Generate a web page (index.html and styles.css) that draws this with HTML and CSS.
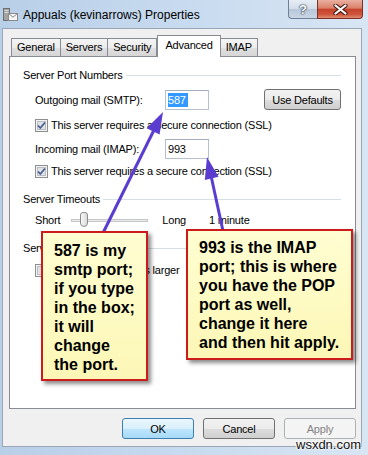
FILE: index.html
```html
<!DOCTYPE html>
<html>
<head>
<meta charset="utf-8">
<title>Appuals (kevinarrows) Properties</title>
<link rel="stylesheet" href="styles.css">
</head>
<body>
<div class="window">
  <div class="titlebar">
    <svg class="app-icon" width="15" height="14" viewBox="0 0 15 14">
      <rect x="0.5" y="0.5" width="6" height="12" fill="#a3a3a3" stroke="#6f6f6f"/>
      <rect x="1.5" y="2" width="4" height="1" fill="#d8d8d8"/>
      <rect x="1.5" y="4" width="4" height="1" fill="#d8d8d8"/>
      <rect x="5.5" y="5.5" width="9" height="7" fill="#f6f6f6" stroke="#8a8a8a"/>
      <path d="M5.5 5.5 L10 9.2 L14.5 5.5" fill="none" stroke="#8a8a8a"/>
    </svg>
    <span class="title">Appuals (kevinarrows) Properties</span>
    <div class="caption-buttons">
      <div class="cap-btn help">?</div>
      <div class="cap-btn close">
        <svg width="15" height="11" viewBox="0 0 15 11">
          <path d="M2.5 1.5 L12.5 9.5 M12.5 1.5 L2.5 9.5" stroke="#4a1a12" stroke-width="4.2" stroke-linecap="round"/>
          <path d="M2.5 1.5 L12.5 9.5 M12.5 1.5 L2.5 9.5" stroke="#ffffff" stroke-width="2.2" stroke-linecap="round"/>
        </svg>
      </div>
    </div>
  </div>

  <div class="client">
    <div class="tabs">
      <div class="tab">General</div>
      <div class="tab">Servers</div>
      <div class="tab">Security</div>
      <div class="tab active">Advanced</div>
      <div class="tab">IMAP</div>
    </div>

    <div class="panel">
      <div class="group-head first">
        <span>Server Port Numbers</span><i class="rule"></i>
      </div>
      <div class="field-row row-a">
        <span class="field-label">Outgoing mail (SMTP):</span>
        <div class="textbox"><span class="selected">587</span></div>
        <div class="btn defaults">Use Defaults</div>
      </div>
      <div class="check-row row-b">
        <svg class="checkbox" width="13" height="13" viewBox="0 0 13 13">
          <rect x="0.5" y="0.5" width="12" height="12" fill="#f4f4f4" stroke="#8e8f8f"/>
          <rect x="2.5" y="2.5" width="8" height="8" fill="#dfe2e6" stroke="#b9bec6"/>
          <path d="M3 6.5 L5.3 9 L10 3.5" fill="none" stroke="#4a5f8f" stroke-width="1.8"/>
        </svg>
        <span>This server requires a secure connection (SSL)</span>
      </div>
      <div class="field-row row-c">
        <span class="field-label">Incoming mail (IMAP):</span>
        <div class="textbox">993</div>
      </div>
      <div class="check-row row-d">
        <svg class="checkbox" width="13" height="13" viewBox="0 0 13 13">
          <rect x="0.5" y="0.5" width="12" height="12" fill="#f4f4f4" stroke="#8e8f8f"/>
          <rect x="2.5" y="2.5" width="8" height="8" fill="#dfe2e6" stroke="#b9bec6"/>
          <path d="M3 6.5 L5.3 9 L10 3.5" fill="none" stroke="#4a5f8f" stroke-width="1.8"/>
        </svg>
        <span>This server requires a secure connection (SSL)</span>
      </div>

      <div class="group-head next">
        <span>Server Timeouts</span><i class="rule"></i>
      </div>
      <div class="slider-row">
        <span>Short</span>
        <div class="slider"><i class="track"></i><i class="thumb"></i></div>
        <span class="long">Long</span>
        <span class="timeout">1 minute</span>
      </div>

      <div class="group-head next">
        <span>Server Downloads</span><i class="rule"></i>
      </div>
      <div class="check-row row-e">
        <svg class="checkbox" width="13" height="13" viewBox="0 0 13 13">
          <rect x="0.5" y="0.5" width="12" height="12" fill="#f4f4f4" stroke="#8e8f8f"/>
          <rect x="2.5" y="2.5" width="8" height="8" fill="#dfe2e6" stroke="#b9bec6"/>
        </svg>
        <span>Download messages larger</span>
      </div>
    </div>

    <div class="buttons">
      <div class="btn default">OK</div>
      <div class="btn">Cancel</div>
      <div class="btn disabled">Apply</div>
    </div>
  </div>

  <svg class="arrows" width="368" height="455" viewBox="0 0 368 455">
    <line x1="103" y1="233" x2="153.5" y2="131" stroke="#5a3dd0" stroke-width="3"/>
    <polygon points="163,112 159.6,134.6 146.6,128.2" fill="#5a3dd0"/>
    <line x1="223" y1="231" x2="211.5" y2="178" stroke="#5a3dd0" stroke-width="3"/>
    <polygon points="207,157 218.5,176.8 204.8,179.9" fill="#5a3dd0"/>
  </svg>

  <div class="note note-left">587 is my<br>smtp port;<br>if you type<br>in the box;<br>it will<br>change<br>the port.</div>
  <div class="note note-right">993 is the IMAP<br>port; this is where<br>you have the POP<br>port as well,<br>change it here<br>and then hit apply.</div>

  <div class="watermark">wsxdn.com</div>
</div>
</body>
</html>
```

FILE: styles.css
```css
* { box-sizing: border-box; }

html, body {
  margin: 0;
  padding: 0;
}

body {
  width: 368px;
  height: 455px;
  overflow: hidden;
  font-family: "Liberation Sans", Arial, sans-serif;
  font-size: 11px;
  letter-spacing: -0.2px;
  color: #000;
  background: #c9dcf0;
}

.window {
  position: relative;
  width: 368px;
  height: 455px;
  display: flex;
  flex-direction: column;
  background: linear-gradient(to right, #b8cfe8 0%, #c6d9ee 45%, #d8e6f4 100%);
}

/* ---------- title bar ---------- */
.titlebar {
  height: 28px;
  display: flex;
  align-items: center;
  padding-left: 3px;
}

.app-icon {
  margin-top: 2px;
  flex: none;
}

.title {
  font-size: 12px;
  letter-spacing: 0;
  margin-left: 5px;
  margin-top: 1px;
}

.caption-buttons {
  display: flex;
  align-self: flex-start;
  margin-left: auto;
  margin-right: 5px;
}

.cap-btn {
  height: 19px;
  display: flex;
  align-items: center;
  justify-content: center;
  border: 1px solid #6f7f95;
  border-top: none;
}

.help {
  width: 29px;
  border-right: none;
  border-radius: 0 0 0 4px;
  background: linear-gradient(#e6edf5 0%, #d3deea 48%, #b7c7da 52%, #c9d6e5 100%);
  color: #fff;
  font-size: 13px;
  font-weight: bold;
  letter-spacing: 0;
  text-shadow: 0 0 1px #2d3d55, 0 0 1px #2d3d55, 0 0 2px #2d3d55;
}

.close {
  width: 46px;
  border-color: #7b3128;
  border-radius: 0 0 4px 0;
  background: linear-gradient(#eab0a2 0%, #db8069 45%, #c6422b 52%, #cf553c 80%, #e08c70 100%);
}

/* ---------- client area ---------- */
.client {
  flex: 1;
  margin: 0 6px 8px 2px;
  background: #f0f0f0;
  border: 1px solid #9aa6b6;
  padding: 6px 5px 0 6px;
  display: flex;
  flex-direction: column;
}

.tabs {
  display: flex;
  align-items: flex-end;
  height: 21px;
  padding-left: 2px;
  position: relative;
  z-index: 1;
}

.tab {
  height: 18px;
  padding: 0 5px;
  line-height: 17px;
  border: 1px solid #898c95;
  border-bottom: none;
  margin-right: -1px;
  background: linear-gradient(#f4f4f4 0%, #ececec 50%, #e0e0e0 52%, #d6d6d6 100%);
}

.tab.active {
  height: 22px;
  margin: 0 -1px -1px 1px;
  padding: 0 7px;
  line-height: 18px;
  background: #fff;
  position: relative;
  z-index: 2;
}

.panel {
  height: 353px;
  background: #fff;
  border: 1px solid #898c95;
  padding: 0 14px 0 13px;
}

.group-head {
  display: flex;
  align-items: center;
  height: 14px;
  line-height: 14px;
  white-space: nowrap;
}

.group-head.first { margin-top: 11px; }
.group-head.next { margin-top: 14px; }

.rule {
  flex: 1;
  height: 1px;
  margin-left: 3px;
  background: #d5dfe5;
}

.field-row {
  display: flex;
  align-items: center;
  height: 21px;
  padding-left: 12px;
}

.row-a { margin-top: 7px; }
.row-c { margin-top: 6px; }

.field-label {
  width: 130px;
  flex: none;
}

.textbox {
  width: 44px;
  height: 20px;
  border: 1px solid #b7c0cc;
  border-top-color: #a3adbb;
  background: #fff;
  padding: 0 0 0 2px;
  line-height: 18px;
}

.selected {
  background: #3399ff;
  color: #fff;
  padding: 1px 2px 1px 0;
}

.check-row {
  display: flex;
  align-items: center;
  height: 14px;
  padding-left: 12px;
  white-space: nowrap;
}

.row-b { margin-top: 8px; }
.row-d { margin-top: 5px; }
.row-e { margin-top: 8px; }

.checkbox {
  flex: none;
  margin-right: 3px;
}

.slider-row {
  display: flex;
  align-items: center;
  height: 14px;
  margin-top: 7px;
  padding-left: 12px;
}

.slider {
  position: relative;
  width: 77px;
  height: 14px;
  margin-left: 11px;
}

.track {
  position: absolute;
  left: 0;
  right: 0;
  top: 6px;
  height: 3px;
  border: 1px solid #c7c7c7;
  background: #e7eaea;
}

.thumb {
  position: absolute;
  left: 9px;
  top: -1px;
  width: 8px;
  height: 15px;
  border: 1px solid #8a8a8a;
  border-radius: 3px 3px 4px 4px;
  background: linear-gradient(to right, #f6f6f6, #dcdcdc);
}

.long { margin-left: 14px; }
.timeout { margin-left: 23px; }

/* ---------- buttons ---------- */
.btn {
  display: flex;
  align-items: center;
  justify-content: center;
  height: 21px;
  border: 1px solid #707070;
  border-radius: 3px;
  background: linear-gradient(#f2f2f2 0%, #ebebeb 50%, #dddddd 52%, #cfcfcf 100%);
  white-space: nowrap;
}

.defaults {
  width: 77px;
  margin-left: auto;
}

.buttons {
  display: flex;
  justify-content: flex-end;
  gap: 9px;
  margin-top: 9px;
}

.buttons .btn { width: 72px; }

.btn.default {
  border-color: #3c7fb1;
  background: linear-gradient(#eaf6fd 0%, #d9f0fc 50%, #bee6fd 52%, #a7d9f5 100%);
}

.btn.disabled {
  border-color: #adb2b5;
  background: #f4f4f4;
  color: #838383;
}

/* ---------- overlays ---------- */
.arrows {
  position: absolute;
  left: 0;
  top: 0;
  z-index: 3;
  pointer-events: none;
}

.note {
  position: absolute;
  z-index: 4;
  border: 2px solid #cc1b1b;
  background: linear-gradient(#fffed2, #fcf7b6);
  box-shadow: 3px 3px 4px rgba(0, 0, 0, 0.45);
  font-size: 16px;
  font-weight: bold;
  line-height: 19px;
  letter-spacing: 0;
  color: #000;
  white-space: nowrap;
}

.note-left {
  left: 41px;
  top: 231px;
  width: 107px;
  height: 150px;
  padding: 8px 0 0 11px;
}

.note-right {
  left: 186px;
  top: 229px;
  width: 167px;
  height: 131px;
  padding: 7px 0 0 11px;
}

.watermark {
  position: absolute;
  z-index: 5;
  left: 296px;
  top: 437px;
  font-size: 13px;
  letter-spacing: 0;
  line-height: 15px;
  color: #111;
  text-shadow: 0 0 2px #fff, 0 0 2px #fff, 0 0 3px #fff;
}
```
